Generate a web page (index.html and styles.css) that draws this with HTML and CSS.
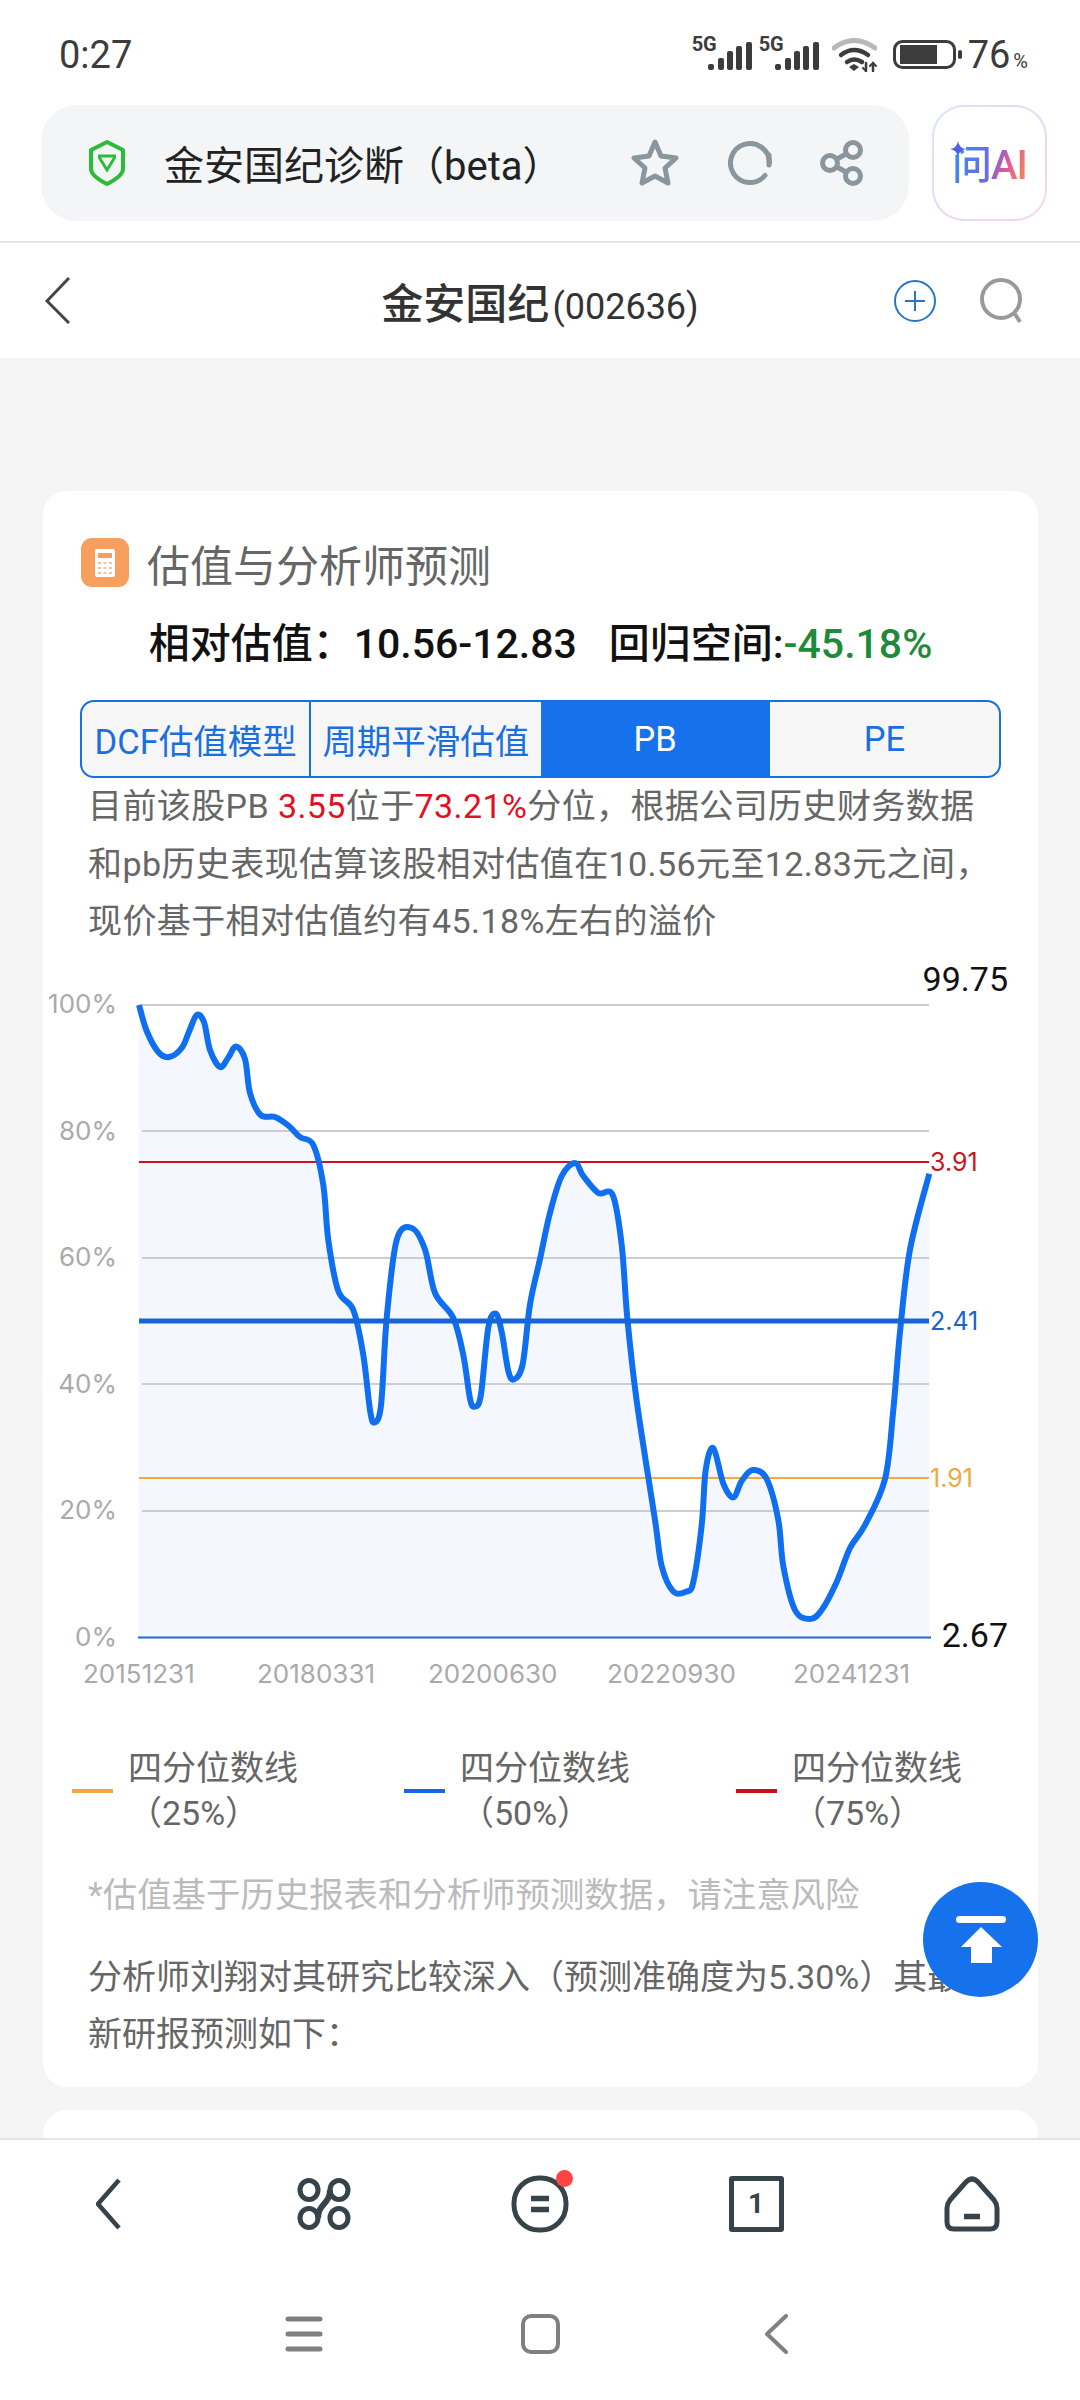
FILE: index.html
```html
<!DOCTYPE html>
<html lang="zh">
<head>
    <meta charset="utf-8">
    <link rel="stylesheet" href="styles.css">
</head>
<body>
<svg class="defs" width="0" height="0">
    <symbol id="bars" viewBox="0 0 44 28">
        <rect x="0" y="22" width="6" height="6" rx="2"/>
        <rect x="10" y="16" width="6" height="12" rx="2"/>
        <rect x="19" y="9" width="6" height="19" rx="2"/>
        <rect x="28" y="4" width="6" height="24" rx="2"/>
        <rect x="38" y="0" width="6" height="28" rx="2"/>
    </symbol>
</svg>

<div class="phone">
    <!-- Status bar -->
    <div class="status-bar">
        <span class="clock">0:27</span>
        <div class="status-icons">
            <div class="signal"><span class="signal-label">5G</span><svg class="signal-bars" width="44" height="28"><use href="#bars"/></svg></div>
            <div class="signal"><span class="signal-label">5G</span><svg class="signal-bars" width="44" height="28"><use href="#bars"/></svg></div>
            <svg class="wifi" width="45" height="34" viewBox="0 0 45 34" fill="none" stroke-linecap="round">
                <path d="M2 10Q22 -5 43 10" stroke="#b8b8b8" stroke-width="5"/>
                <path d="M9 17Q22 7 36 17" stroke="#3c3c3c" stroke-width="4.5"/>
                <path d="M15 24Q22 19 30 24" stroke="#3c3c3c" stroke-width="4.5"/>
                <path d="M17 29L22 26L27 29L22 33Z" fill="#3c3c3c"/>
                <path d="M34 25V33M41 25V33" stroke="#3c3c3c" stroke-width="2.5"/>
                <path d="M31 30L34 33M38 28L41 25L44 28" stroke="#3c3c3c" stroke-width="2"/>
            </svg>
            <svg class="battery" width="69" height="29" viewBox="0 0 69 29">
                <rect x="1.5" y="1.5" width="60" height="26" rx="8" fill="none" stroke="#3c3c3c" stroke-width="3"/>
                <rect x="7" y="5" width="37" height="19" fill="#3c3c3c"/>
                <rect x="65" y="10" width="4" height="9" rx="2" fill="#3c3c3c"/>
            </svg>
            <span class="battery-level">76<small>%</small></span>
        </div>
    </div>

    <!-- Address bar -->
    <div class="url-row">
        <div class="url-bar">
            <svg class="shield" width="36" height="46" viewBox="0 0 36 46" fill="none" stroke="#2dbb3a">
                <path d="M18 2L34 10V29Q34 36 18 44Q2 36 2 29V10Z" stroke-width="4" stroke-linejoin="round"/>
                <path d="M9 16H27M10 17L18 30L26 17" stroke-width="3"/>
            </svg>
            <span class="url-title">金安国纪诊断（beta）</span>
            <div class="url-actions">
                <svg width="50" height="50" viewBox="0 0 50 50" fill="none" stroke="#8a969d" stroke-width="5" stroke-linejoin="round">
                    <path d="M25 4L31 18L46 20L35 30L38 45L25 38L12 45L15 30L4 20L19 18Z"/>
                </svg>
                <svg width="44" height="46" viewBox="0 0 44 46" fill="none" stroke="#8a969d" stroke-width="5" stroke-linecap="round">
                    <path d="M37 35.500A19.500 19.500 0 1 1 41.500 23"/>
                    <path d="M41 25V15"/>
                </svg>
                <svg width="44" height="46" viewBox="0 0 44 46" fill="none" stroke="#8a969d" stroke-width="5">
                    <circle cx="10" cy="23" r="7.500"/>
                    <circle cx="33" cy="10" r="7.500"/>
                    <circle cx="33" cy="36" r="7.500"/>
                    <path d="M17 19L26 14M17 27L26 32"/>
                </svg>
            </div>
        </div>
        <div class="ask-ai">
            <svg class="ask-spark" width="16" height="16" viewBox="0 0 16 16"><path d="M8 0Q9 7 16 8Q9 9 8 16Q7 9 0 8Q7 7 8 0Z" fill="#4a63e8"/></svg>
            <span class="ask-text">问AI</span>
        </div>
    </div>

    <!-- Stock header -->
    <div class="page-header">
        <svg class="header-back" width="25" height="47" viewBox="0 0 25 47" fill="none" stroke="#444" stroke-width="3"><path d="M24 1L2 24L24 46"/></svg>
        <div class="stock-name">金安国纪<span class="stock-code">(002636)</span></div>
        <div class="header-actions">
            <svg width="42" height="42" viewBox="0 0 42 42" fill="none" stroke="#2a74c8" stroke-width="2"><circle cx="21" cy="21" r="20"/><path d="M21 11V31M11 21H31"/></svg>
            <svg width="44" height="46" viewBox="0 0 44 46" fill="none" stroke="#999" stroke-width="4"><circle cx="21" cy="21" r="19"/><path d="M35 36L40 44"/></svg>
        </div>
    </div>

    <div class="content">
        <div class="card">
            <div class="card-title">
                <span class="calc-icon">
                    <svg width="20" height="28" viewBox="0 0 20 28">
                        <rect width="20" height="28" rx="2" fill="#fff"/>
                        <rect x="3" y="4" width="14" height="5" fill="#f69f5e"/>
                        <path d="M3 13h3v2H3zM8.500 13h3v2h-3zM14 13h3v2h-3zM3 18h3v2H3zM8.500 18h3v2h-3zM14 18h3v2h-3zM3 23h3v2H3zM8.500 23h3v2h-3zM14 23h3v2h-3z" fill="#f8c096"/>
                    </svg>
                </span>
                <span>估值与分析师预测</span>
            </div>

            <div class="valuation">相对估值：10.56-12.83<span class="valuation-gap"></span>回归空间:<span class="green">-45.18%</span></div>

            <div class="tabs">
                <div class="tab tab-split">DCF估值模型</div>
                <div class="tab">周期平滑估值</div>
                <div class="tab active">PB</div>
                <div class="tab">PE</div>
            </div>

            <p class="desc">目前该股PB <span class="red">3.55</span>位于<span class="red">73.21%</span>分位，根据公司历史财务数据和pb历史表现估算该股相对估值在10.56元至12.83元之间，现价基于相对估值约有45.18%左右的溢价</p>

            <svg class="chart" width="995" height="745" viewBox="43 950 995 745">
                <path id="area" class="chart-area"/>

                <path class="grid" d="M142 1004H929M142 1130H929M142 1257H929M142 1383H929M142 1510H929"/>
                <path class="line-axis" d="M138 1636.500H931"/>
                <path class="line-75" d="M139 1161H929"/>
                <path class="line-25" d="M139 1477H929"/>

                <path id="curve" class="chart-curve"/>
                <path class="line-50" d="M139 1320H929"/>

                <text class="y-label" x="117" y="1012">100%</text>
                <text class="y-label" x="117" y="1139">80%</text>
                <text class="y-label" x="117" y="1265">60%</text>
                <text class="y-label" x="117" y="1392">40%</text>
                <text class="y-label" x="117" y="1518">20%</text>
                <text class="y-label" x="117" y="1645">0%</text>

                <text class="x-label" x="83" y="1682">20151231</text>
                <text class="x-label" x="257" y="1682">20180331</text>
                <text class="x-label" x="428" y="1682">20200630</text>
                <text class="x-label" x="607" y="1682">20220930</text>
                <text class="x-label" x="793" y="1682">20241231</text>

                <text class="val-label" x="1008" y="990">99.75</text>
                <text class="val-label" x="1008" y="1646">2.67</text>
                <text class="mark-label mark-75" x="930" y="1170">3.91</text>
                <text class="mark-label mark-50" x="930" y="1329">2.41</text>
                <text class="mark-label mark-25" x="930" y="1486">1.91</text>
            </svg>

            <div class="legend">
                <div class="legend-item"><span class="swatch swatch-25"></span><span class="legend-text">四分位数线（25%）</span></div>
                <div class="legend-item"><span class="swatch swatch-50"></span><span class="legend-text">四分位数线（50%）</span></div>
                <div class="legend-item"><span class="swatch swatch-75"></span><span class="legend-text">四分位数线（75%）</span></div>
            </div>

            <p class="note">*估值基于历史报表和分析师预测数据，请注意风险</p>
            <p class="analyst">分析师刘翔对其研究比较深入（预测准确度为5.30%）其最新研报预测如下：</p>
        </div>

        <div class="card card-next"></div>
    </div>

    <!-- Back to top -->
    <div class="to-top">
        <svg width="50" height="47" viewBox="0 0 50 47" fill="#fff">
            <rect width="50" height="7" rx="3.500"/>
            <path d="M25 11L46 31H36V47H15V31H5Z"/>
        </svg>
    </div>

    <!-- Browser toolbar -->
    <div class="toolbar">
        <div class="tool">
            <svg width="25" height="50" viewBox="0 0 25 50" fill="none" stroke="#37434a" stroke-width="4.500"><path d="M23 1L2 25L23 49"/></svg>
        </div>
        <div class="tool">
            <svg width="54" height="52" viewBox="0 0 54 52" fill="none" stroke="#37434a" stroke-width="5">
                <ellipse cx="12" cy="12" rx="9" ry="9.500"/>
                <ellipse cx="42" cy="12" rx="9" ry="9.500"/>
                <ellipse cx="12" cy="40" rx="9" ry="9.500"/>
                <ellipse cx="42" cy="40" rx="9" ry="9.500"/>
                <path d="M33 12C33 26 21 26 21 40" stroke-width="6"/>
            </svg>
        </div>
        <div class="tool">
            <svg class="tool-menu" width="58" height="58" viewBox="0 0 58 58" fill="none" stroke="#37434a" stroke-width="5">
                <rect x="3" y="3" width="52" height="52" rx="25"/>
                <path d="M20 23.500H38M20 34.500H38" stroke-width="5.500"/>
            </svg>
            <span class="tool-dot"></span>
        </div>
        <div class="tool">
            <div class="tab-count">1</div>
        </div>
        <div class="tool">
            <svg width="56" height="56" viewBox="0 0 56 56" fill="none" stroke="#37434a" stroke-width="5" stroke-linejoin="round">
                <path d="M22 6Q28 0 34 6L50 24Q53 28 53 32V46Q53 53 46 53H10Q3 53 3 46V32Q3 28 6 24Z"/>
                <path d="M20 40.500H36" stroke-width="5.500"/>
            </svg>
        </div>
    </div>

    <!-- System navigation -->
    <div class="sys-nav">
        <div class="sys-key">
            <svg width="38" height="36" viewBox="0 0 38 36" fill="none" stroke="#808080" stroke-width="5" stroke-linecap="round"><path d="M3 3H35M3 18H35M3 33H35"/></svg>
        </div>
        <div class="sys-key">
            <svg width="39" height="40" viewBox="0 0 39 40" fill="none" stroke="#808080" stroke-width="4"><rect x="2" y="2" width="35" height="36" rx="8"/></svg>
        </div>
        <div class="sys-key">
            <svg width="24" height="40" viewBox="0 0 24 40" fill="none" stroke="#808080" stroke-width="4" stroke-linecap="round" stroke-linejoin="round"><path d="M22 2L3 20L22 38"/></svg>
        </div>
    </div>
</div>

<script src="chart.js"></script>
</body>
</html>
```

FILE: styles.css
```css
* {
    box-sizing: border-box;
}
body {
    margin: 0;
    background: #fff;
    font-family: Roboto, "Noto Sans CJK SC", sans-serif;
    color: #666;
}
.defs {
    position: absolute;
}
.phone {
    position: relative;
    display: flex;
    flex-direction: column;
    width: 1080px;
    height: 2400px;
    overflow: hidden;
}

/* Status bar */
.status-bar {
    display: flex;
    align-items: center;
    justify-content: space-between;
    height: 105px;
    flex: none;
    padding: 4px 52px 0 59px;
    color: #3c3c3c;
}
.clock {
    font-size: 38px;
}
.status-icons {
    display: flex;
    align-items: center;
}
.signal {
    position: relative;
    width: 60px;
    height: 31px;
    margin-right: 7px;
    text-align: right;
}
.signal-label {
    position: absolute;
    left: 0;
    top: -7px;
    font-size: 20px;
    font-weight: 700;
    line-height: 24px;
}
.signal-bars {
    fill: #3c3c3c;
    margin-top: 3px;
}
.wifi {
    margin: 0 16px 0 6px;
}
.battery {
    margin-right: 6px;
}
.battery-level {
    font-size: 38px;
    line-height: 1;
}
.battery-level small {
    font-size: 20px;
    margin-left: 3px;
}

/* Address bar */
.url-row {
    display: flex;
    gap: 23px;
    height: 138px;
    flex: none;
    padding: 0 33px 20px 41px;
    border-bottom: 2px solid #e4e6e8;
}
.url-bar {
    display: flex;
    align-items: center;
    width: 868px;
    padding: 0 45px 0 48px;
    background: #f3f5f7;
    border-radius: 36px;
}
.url-title {
    margin-left: 39px;
    font-size: 40px;
    color: #222;
    white-space: nowrap;
}
.url-actions {
    display: flex;
    align-items: center;
    gap: 48px;
    margin-left: auto;
}
.ask-ai {
    position: relative;
    display: flex;
    align-items: center;
    justify-content: center;
    width: 115px;
    border: 2px solid transparent;
    border-radius: 32px;
    background: linear-gradient(#fff, #fff) padding-box,
        linear-gradient(135deg, #d5e6fb, #e8d8f4, #f3d9ee) border-box;
}
.ask-spark {
    position: absolute;
    left: 16px;
    top: 34px;
}
.ask-text {
    font-size: 40px;
    font-weight: 500;
    line-height: 48px;
    margin-top: 6px;
    letter-spacing: -1px;
    background: linear-gradient(110deg, #3d8cf0 10%, #6a6ae6 50%, #e0559f 68%, #f59a40 100%);
    -webkit-background-clip: text;
    background-clip: text;
    color: transparent;
}

/* Stock header */
.page-header {
    display: grid;
    grid-template-columns: 1fr auto 1fr;
    align-items: center;
    height: 115px;
    padding: 0 56px 0 45px;
    flex: none;
    background: #fff;
}
.stock-name {
    font-size: 42px;
    font-weight: 500;
    color: #333;
    white-space: nowrap;
    margin-left: 11px;
}
.stock-code {
    font-size: 36px;
    font-weight: 400;
    margin-left: 3px;
}
.header-actions {
    display: flex;
    justify-content: flex-end;
    align-items: center;
    gap: 44px;
}

/* Main content */
.content {
    flex: 1;
    min-height: 0;
    padding: 133px 42px 0 43px;
    overflow: hidden;
    background: #f5f5f5;
}
.card {
    height: 1596px;
    padding-top: 47px;
    background: #fff;
    border-radius: 24px;
}
.card-next {
    height: 80px;
    margin-top: 23px;
    padding: 0;
}
.card-title {
    display: flex;
    align-items: center;
    gap: 18px;
    height: 49px;
    padding-left: 38px;
    font-size: 43px;
    color: #666;
}
.calc-icon {
    display: flex;
    align-items: center;
    justify-content: center;
    width: 48px;
    height: 49px;
    background: #f69f5e;
    border-radius: 11px;
}
.valuation {
    height: 56px;
    margin: 29px 0 28px;
    font-size: 41px;
    font-weight: 500;
    line-height: 56px;
    text-align: center;
    color: #111;
    white-space: nowrap;
}
.valuation-gap {
    display: inline-block;
    width: 32px;
}
.green {
    color: #1f8a3c;
}
.red {
    color: #e0101c;
}

/* Tabs */
.tabs {
    display: grid;
    grid-template-columns: repeat(4, 1fr);
    height: 78px;
    margin: 0 37px;
    border: 2px solid #1a6fe0;
    border-radius: 14px;
    overflow: hidden;
    background: #f6f6f6;
}
.tab {
    display: flex;
    align-items: center;
    justify-content: center;
    font-size: 34.5px;
    color: #1a6fe0;
    white-space: nowrap;
}
.tab-split {
    border-right: 2px solid #1a6fe0;
}
.tab.active {
    background: #1672ec;
    color: #fff;
}

.desc {
    width: 905px;
    margin: 0 0 0 45px;
    font-size: 34px;
    line-height: 57.5px;
    letter-spacing: 0.4px;
}

/* Chart */
.chart {
    display: block;
}
.chart-area {
    fill: #f4f8fe;
}
.chart-curve {
    fill: none;
    stroke: #0f6ff0;
    stroke-width: 6;
    stroke-linejoin: round;
}
.grid {
    fill: none;
    stroke: #cbcdd0;
    stroke-width: 2;
}
.line-axis {
    stroke: #1a6bd0;
    stroke-width: 2;
}
.line-75 {
    stroke: #d0101c;
    stroke-width: 2;
}
.line-50 {
    stroke: #1565d8;
    stroke-width: 5;
}
.line-25 {
    stroke: #f5a83c;
    stroke-width: 2;
}
.y-label {
    font-family: Inter, sans-serif;
    font-size: 26px;
    fill: #aaa;
    text-anchor: end;
}
.x-label {
    font-family: Inter, sans-serif;
    font-size: 26px;
    fill: #aaa;
}
.val-label {
    font-size: 34px;
    fill: #111;
    text-anchor: end;
}
.mark-label {
    font-family: Inter, sans-serif;
    font-size: 25px;
}
.mark-75 {
    fill: #c8141c;
}
.mark-50 {
    fill: #1a63c8;
}
.mark-25 {
    fill: #f0a83c;
}

/* Legend */
.legend {
    display: grid;
    grid-template-columns: repeat(3, 332px);
    margin: 50px 0 0 29px;
}
.legend-item {
    display: flex;
    align-items: center;
    gap: 15px;
}
.swatch {
    width: 41px;
    height: 4px;
}
.swatch-25 {
    background: #f0a83c;
}
.swatch-50 {
    background: #1468e0;
}
.swatch-75 {
    background: #c8101a;
}
.legend-text {
    width: 172px;
    font-size: 34px;
    line-height: 45px;
}

.note {
    margin: 31px 0 0 45px;
    font-size: 34.4px;
    line-height: 57px;
    color: #bbb;
}
.analyst {
    width: 900px;
    margin: 25px 0 0 45px;
    font-size: 34px;
    line-height: 57px;
}

/* Floating button */
.to-top {
    position: absolute;
    left: 923px;
    top: 1882px;
    display: flex;
    align-items: center;
    justify-content: center;
    width: 115px;
    height: 115px;
    background: #1672ec;
    border-radius: 50%;
}

/* Bottom bars */
.toolbar {
    display: grid;
    grid-template-columns: repeat(5, 216px);
    height: 130px;
    flex: none;
    background: #fff;
    border-top: 2px solid #e4e4e4;
}
.tool {
    position: relative;
    display: flex;
    align-items: center;
    justify-content: center;
}
.tool-dot {
    position: absolute;
    left: 124px;
    top: 30px;
    width: 17px;
    height: 17px;
    background: #f44;
    border-radius: 50%;
}
.tab-count {
    width: 55px;
    height: 56px;
    border: 5px solid #37434a;
    border-radius: 3px;
    font-size: 28px;
    font-weight: 700;
    line-height: 46px;
    text-align: center;
    color: #37434a;
}
.sys-nav {
    display: flex;
    justify-content: center;
    align-items: center;
    height: 132px;
    flex: none;
    background: #fff;
}
.sys-key {
    display: flex;
    justify-content: center;
    width: 236px;
}
```

FILE: chart.js
```js
// percentile history, traced as page coordinates [x, y]
var points = [
    [139,1004],[146.7,1030],[158.3,1051],[169,1056],[181.7,1047],[189.3,1030],[196.7,1014],[204,1021],
    [210,1049],[220,1066],[228.3,1056.5],[236,1045.5],[245,1058],[250,1092],[260.7,1114],[275,1116],
    [288.3,1124.5],[300,1136],[313.3,1144],[323.3,1184],[328.3,1239],[338.3,1290],[353.3,1309],[363.3,1354],
    [370,1409],[374.3,1421.5],[381,1404.5],[386.7,1317],[396.7,1239],[411.7,1227],[425,1248.5],[435,1292],
    [453.3,1317],[463.3,1354],[470,1397.7],[474.3,1405.5],[480.7,1395],[488.3,1326.5],[495.7,1312.7],[501.7,1331],
    [508.3,1370],[514,1378.4],[522.7,1363],[530,1303.5],[540,1258],[550,1211.7],[561.7,1175],[575,1162],
    [583.3,1175],[598.3,1192],[612.7,1194],[621.7,1244],[627.3,1317],[636.7,1400],[655,1519],[661.7,1565],
    [673.3,1590.5],[686.7,1590.5],[693.3,1581],[701.7,1524],[705.7,1469],[713.3,1447],[723.3,1482.6],[733.3,1496.4],
    [741.7,1480],[752.7,1469],[766.7,1478],[778.3,1519],[783.3,1565],[795,1609],[810,1618],[821.7,1609],
    [836.7,1581],[850,1547],[865,1524],[885,1478],[893.3,1409],[900,1331],[910,1248.5],[929.3,1172.7]
];

function smoothPath(pts) {
    var d = 'M' + pts[0][0] + ' ' + pts[0][1];
    for (var i = 0; i < pts.length - 1; i++) {
        var p0 = pts[Math.max(i - 1, 0)];
        var p1 = pts[i];
        var p2 = pts[i + 1];
        var p3 = pts[Math.min(i + 2, pts.length - 1)];
        var c1x = p1[0] + (p2[0] - p0[0]) / 6;
        var c1y = p1[1] + (p2[1] - p0[1]) / 6;
        var c2x = p2[0] - (p3[0] - p1[0]) / 6;
        var c2y = p2[1] - (p3[1] - p1[1]) / 6;
        d += 'C' + c1x + ' ' + c1y + ' ' + c2x + ' ' + c2y + ' ' + p2[0] + ' ' + p2[1];
    }
    return d;
}

var line = smoothPath(points);
document.getElementById('curve').setAttribute('d', line);
document.getElementById('area').setAttribute('d', line + 'V1636H139Z');
```
